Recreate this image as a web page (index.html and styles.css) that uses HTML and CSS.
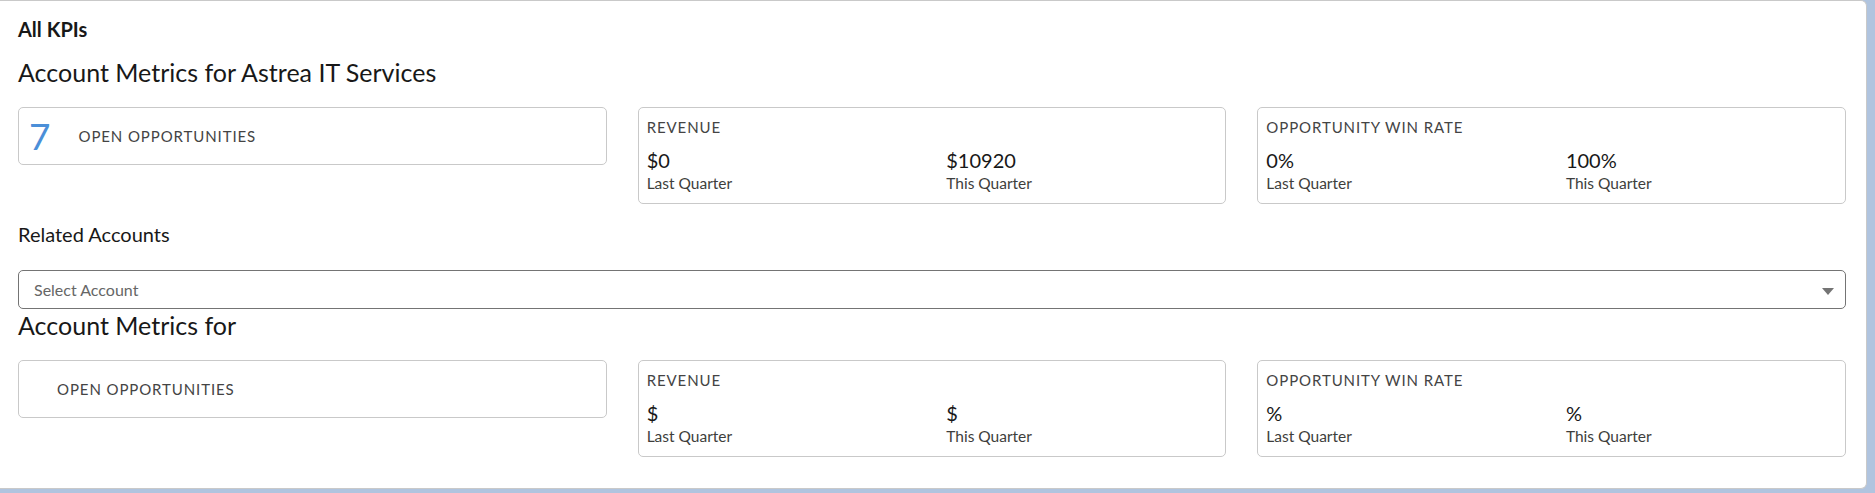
FILE: index.html
```html
<!DOCTYPE html>
<html lang="en">
<head>
    <meta charset="UTF-8">
    <meta name="viewport" content="width=device-width, initial-scale=1.0">
    <title>All KPIs</title>
    <link rel="stylesheet" href="styles.css">
</head>
<body>
    <div class="page">
        <h2 class="card-title">All KPIs</h2>

        <h3 class="metrics-heading">Account Metrics for Astrea IT Services</h3>
        <div class="kpi-row">
            <div class="kpi-card kpi-count">
                <span class="kpi-number">7</span>
                <span class="kpi-caps">Open Opportunities</span>
            </div>
            <div class="kpi-card">
                <div class="kpi-caps">Revenue</div>
                <div class="kpi-split">
                    <div>
                        <div class="kpi-value">$0</div>
                        <div class="kpi-label">Last Quarter</div>
                    </div>
                    <div>
                        <div class="kpi-value">$10920</div>
                        <div class="kpi-label">This Quarter</div>
                    </div>
                </div>
            </div>
            <div class="kpi-card">
                <div class="kpi-caps">Opportunity Win Rate</div>
                <div class="kpi-split">
                    <div>
                        <div class="kpi-value">0%</div>
                        <div class="kpi-label">Last Quarter</div>
                    </div>
                    <div>
                        <div class="kpi-value">100%</div>
                        <div class="kpi-label">This Quarter</div>
                    </div>
                </div>
            </div>
        </div>

        <div class="related-title">Related Accounts</div>
        <div class="select-box">
            <span class="select-placeholder">Select Account</span>
            <svg class="select-arrow" width="12" height="7" viewBox="0 0 12 7">
                <polygon points="0,0 12,0 6,7" fill="#747474"/>
            </svg>
        </div>

        <h3 class="metrics-heading tight">Account Metrics for </h3>
        <div class="kpi-row">
            <div class="kpi-card kpi-count">
                <span class="kpi-number"></span>
                <span class="kpi-caps">Open Opportunities</span>
            </div>
            <div class="kpi-card">
                <div class="kpi-caps">Revenue</div>
                <div class="kpi-split">
                    <div>
                        <div class="kpi-value">$</div>
                        <div class="kpi-label">Last Quarter</div>
                    </div>
                    <div>
                        <div class="kpi-value">$</div>
                        <div class="kpi-label">This Quarter</div>
                    </div>
                </div>
            </div>
            <div class="kpi-card">
                <div class="kpi-caps">Opportunity Win Rate</div>
                <div class="kpi-split">
                    <div>
                        <div class="kpi-value">%</div>
                        <div class="kpi-label">Last Quarter</div>
                    </div>
                    <div>
                        <div class="kpi-value">%</div>
                        <div class="kpi-label">This Quarter</div>
                    </div>
                </div>
            </div>
        </div>
    </div>
</body>
</html>
```

FILE: styles.css
```css
body {
    font-family: Lato, "Open Sans", sans-serif;
    background-color: #b0c4df;
    color: #181818;
    margin: 0;
    padding: 0;
}

.page {
    box-sizing: border-box;
    width: 1867px;
    height: 489px;
    background-color: #fff;
    border: 1px solid #c9c9c9;
    border-left: none;
    border-radius: 0 6px 6px 0;
    padding: 16px 20px 0 18px;
}

.card-title {
    margin: 0;
    font-size: 20px;
    line-height: 25px;
    font-weight: 700;
}

.metrics-heading {
    margin: 15px 0 19px;
    font-size: 25px;
    line-height: 31px;
    font-weight: 400;
}

.metrics-heading.tight {
    margin-top: 1px;
}

.kpi-row {
    display: grid;
    grid-template-columns: repeat(3, 1fr);
    gap: 31px;
    align-items: start;
}

.kpi-card {
    border: 1px solid #c9c9c9;
    border-radius: 5px;
    padding: 9px 8px 10px;
}

.kpi-count {
    display: flex;
    align-items: center;
    height: 58px;
    box-sizing: border-box;
    padding: 0 10px;
}

.kpi-number {
    font-size: 37px;
    line-height: 44px;
    color: #4b8fd8;
    margin-right: 28px;
}

.kpi-caps {
    font-size: 15px;
    line-height: 20px;
    letter-spacing: 0.9px;
    text-transform: uppercase;
    color: #444;
}

.kpi-split {
    display: grid;
    grid-template-columns: 52.5% 1fr;
    margin-top: 11px;
}

.kpi-value {
    font-size: 20px;
    line-height: 25px;
}

.kpi-label {
    font-size: 15.5px;
    line-height: 20px;
    color: #3e3e3c;
}

.related-title {
    margin-top: 18px;
    font-size: 20px;
    line-height: 25px;
}

.select-box {
    display: flex;
    align-items: center;
    justify-content: space-between;
    box-sizing: border-box;
    height: 39px;
    margin-top: 23px;
    border: 1px solid #747474;
    border-radius: 5px;
    padding: 0 11px 0 15px;
}

.select-placeholder {
    font-size: 16px;
    color: #666;
}

.select-arrow {
    margin-top: 3px;
}
```
